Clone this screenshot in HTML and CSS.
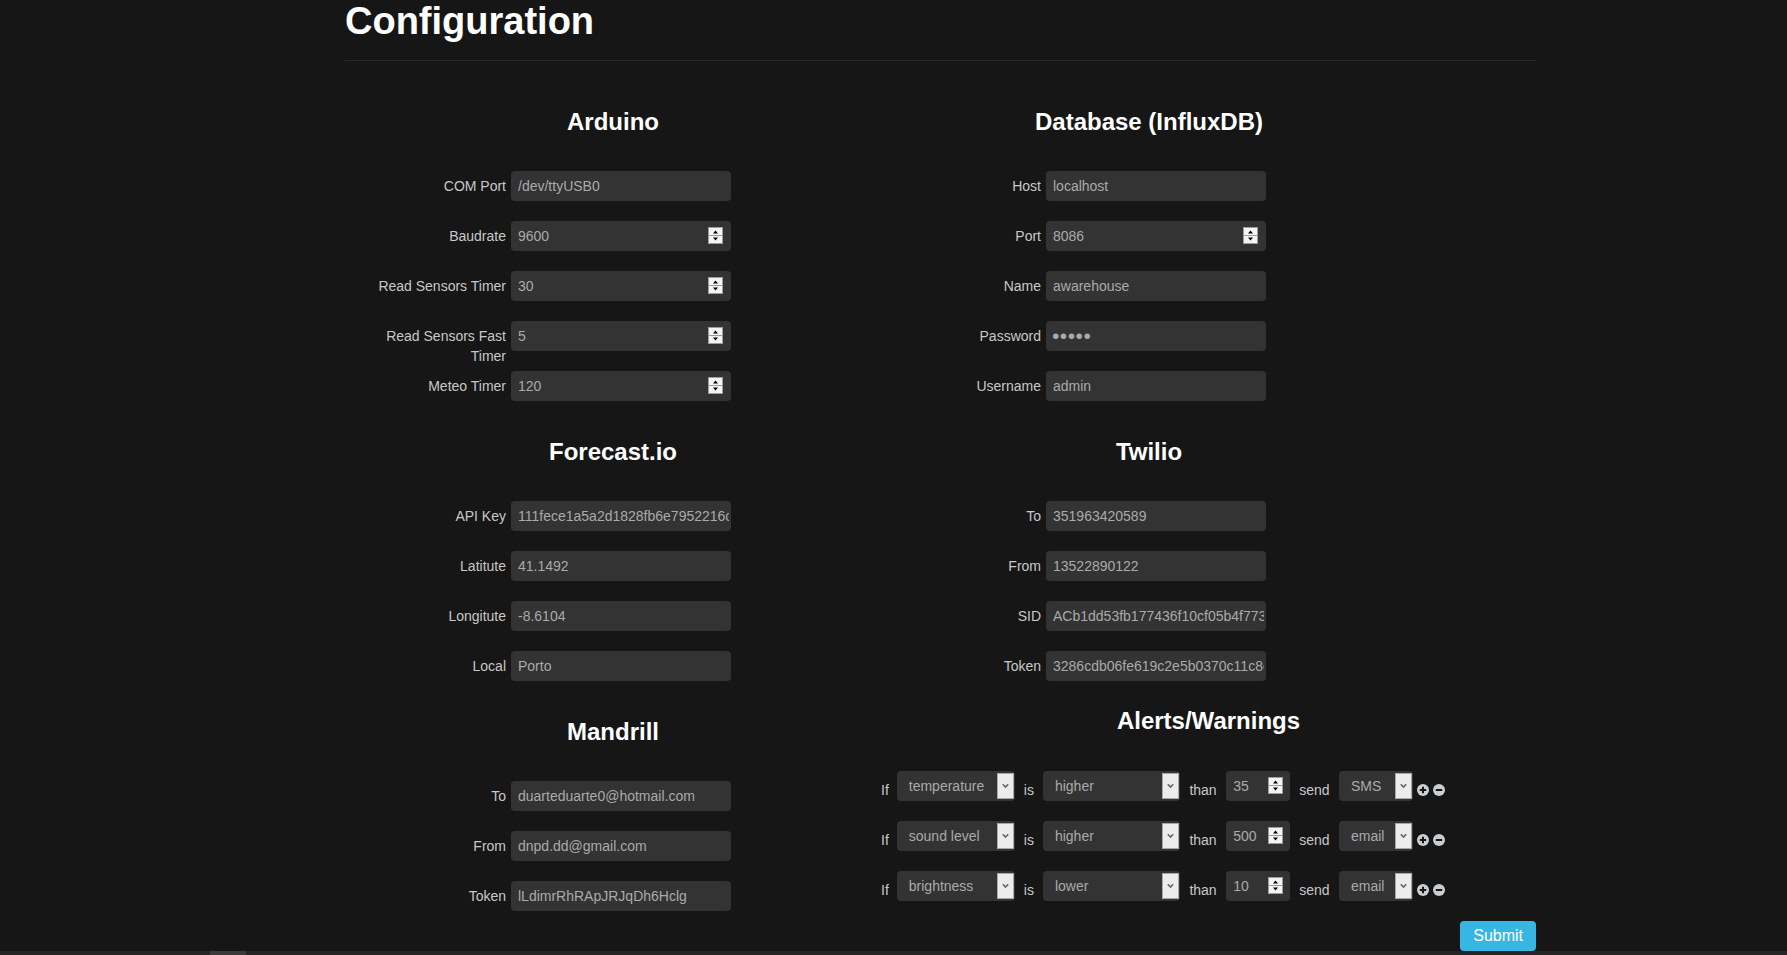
FILE: index.html
```html
<!DOCTYPE html>
<html lang="en">
<head>
<meta charset="utf-8">
<title>Configuration</title>
<link rel="stylesheet" href="styles.css">
</head>
<body>
<div class="page">
  <h1 class="title">Configuration</h1>
  <hr class="rule">
  <form class="grid">
    <div class="col col-left">
      <section class="sect">
        <h3 class="head">Arduino</h3>
        <div class="row"><label class="lbl">COM Port</label><input class="inp" type="text" value="/dev/ttyUSB0"></div>
        <div class="row"><label class="lbl">Baudrate</label><div class="num"><input class="inp" type="number" value="9600"><svg class="spin" viewBox="0 0 15 17"><rect x=".5" y=".5" width="14" height="16" fill="#f4f4f4" stroke="#9c9c9c"/><path d="M1 8.5h13" stroke="#9c9c9c"/><path d="M5 6.5h5L7.5 3.5z" fill="#000"/><path d="M5 10.5h5L7.5 13.5z" fill="#000"/></svg></div></div>
        <div class="row"><label class="lbl">Read Sensors Timer</label><div class="num"><input class="inp" type="number" value="30"><svg class="spin" viewBox="0 0 15 17"><rect x=".5" y=".5" width="14" height="16" fill="#f4f4f4" stroke="#9c9c9c"/><path d="M1 8.5h13" stroke="#9c9c9c"/><path d="M5 6.5h5L7.5 3.5z" fill="#000"/><path d="M5 10.5h5L7.5 13.5z" fill="#000"/></svg></div></div>
        <div class="row"><label class="lbl">Read Sensors Fast Timer</label><div class="num"><input class="inp" type="number" value="5"><svg class="spin" viewBox="0 0 15 17"><rect x=".5" y=".5" width="14" height="16" fill="#f4f4f4" stroke="#9c9c9c"/><path d="M1 8.5h13" stroke="#9c9c9c"/><path d="M5 6.5h5L7.5 3.5z" fill="#000"/><path d="M5 10.5h5L7.5 13.5z" fill="#000"/></svg></div></div>
        <div class="row"><label class="lbl">Meteo Timer</label><div class="num"><input class="inp" type="number" value="120"><svg class="spin" viewBox="0 0 15 17"><rect x=".5" y=".5" width="14" height="16" fill="#f4f4f4" stroke="#9c9c9c"/><path d="M1 8.5h13" stroke="#9c9c9c"/><path d="M5 6.5h5L7.5 3.5z" fill="#000"/><path d="M5 10.5h5L7.5 13.5z" fill="#000"/></svg></div></div>
      </section>
      <section class="sect">
        <h3 class="head">Forecast.io</h3>
        <div class="row"><label class="lbl">API Key</label><input class="inp" type="text" value="111fece1a5a2d1828fb6e7952216c0a3"></div>
        <div class="row"><label class="lbl">Latitute</label><input class="inp" type="text" value="41.1492"></div>
        <div class="row"><label class="lbl">Longitute</label><input class="inp" type="text" value="-8.6104"></div>
        <div class="row"><label class="lbl">Local</label><input class="inp" type="text" value="Porto"></div>
      </section>
      <section class="sect">
        <h3 class="head">Mandrill</h3>
        <div class="row"><label class="lbl">To</label><input class="inp" type="text" value="duarteduarte0@hotmail.com"></div>
        <div class="row"><label class="lbl">From</label><input class="inp" type="text" value="dnpd.dd@gmail.com"></div>
        <div class="row"><label class="lbl">Token</label><input class="inp" type="text" value="lLdimrRhRApJRJqDh6Hclg"></div>
      </section>
    </div>
    <div class="col col-right">
      <section class="sect">
        <h3 class="head">Database (InfluxDB)</h3>
        <div class="row"><label class="lbl">Host</label><input class="inp" type="text" value="localhost"></div>
        <div class="row"><label class="lbl">Port</label><div class="num"><input class="inp" type="number" value="8086"><svg class="spin" viewBox="0 0 15 17"><rect x=".5" y=".5" width="14" height="16" fill="#f4f4f4" stroke="#9c9c9c"/><path d="M1 8.5h13" stroke="#9c9c9c"/><path d="M5 6.5h5L7.5 3.5z" fill="#000"/><path d="M5 10.5h5L7.5 13.5z" fill="#000"/></svg></div></div>
        <div class="row"><label class="lbl">Name</label><input class="inp" type="text" value="awarehouse"></div>
        <div class="row"><label class="lbl">Password</label><input class="inp pass" type="password" value="admin"></div>
        <div class="row"><label class="lbl">Username</label><input class="inp" type="text" value="admin"></div>
      </section>
      <section class="sect">
        <h3 class="head">Twilio</h3>
        <div class="row"><label class="lbl">To</label><input class="inp" type="text" value="351963420589"></div>
        <div class="row"><label class="lbl">From</label><input class="inp" type="text" value="13522890122"></div>
        <div class="row"><label class="lbl">SID</label><input class="inp" type="text" value="ACb1dd53fb177436f10cf05b4f7731a2"></div>
        <div class="row"><label class="lbl">Token</label><input class="inp" type="text" value="3286cdb06fe619c2e5b0370c11c8e4d2"></div>
      </section>
      <section class="sect alerts">
        <h3 class="head">Alerts/Warnings</h3>

        <div class="arow">
          <span class="word w-if">If</span>
          <div class="sel s1"><select><option>temperature</option></select><svg class="dd" viewBox="0 0 17 26"><rect x=".5" y=".5" width="16" height="25" fill="#ececec" stroke="#a8a8a8"/><path d="M5.8 11.2l2.7 2.8 2.7-2.8" fill="none" stroke="#666" stroke-width="1.6"/></svg></div>
          <span class="word w-is">is</span>
          <div class="sel s2"><select><option>higher</option></select><svg class="dd" viewBox="0 0 17 26"><rect x=".5" y=".5" width="16" height="25" fill="#ececec" stroke="#a8a8a8"/><path d="M5.8 11.2l2.7 2.8 2.7-2.8" fill="none" stroke="#666" stroke-width="1.6"/></svg></div>
          <span class="word w-than">than</span>
          <div class="num anum"><input class="inp" type="number" value="35"><svg class="spin" viewBox="0 0 15 17"><rect x=".5" y=".5" width="14" height="16" fill="#f4f4f4" stroke="#9c9c9c"/><path d="M1 8.5h13" stroke="#9c9c9c"/><path d="M5 6.5h5L7.5 3.5z" fill="#000"/><path d="M5 10.5h5L7.5 13.5z" fill="#000"/></svg></div>
          <span class="word w-send">send</span>
          <div class="sel s4"><select><option>SMS</option></select><svg class="dd" viewBox="0 0 17 26"><rect x=".5" y=".5" width="16" height="25" fill="#ececec" stroke="#a8a8a8"/><path d="M5.8 11.2l2.7 2.8 2.7-2.8" fill="none" stroke="#666" stroke-width="1.6"/></svg></div>
          <svg class="icon plus" viewBox="0 0 12 12"><circle cx="6" cy="6" r="6" fill="#c9ced3"/><path d="M6 2.8v6.4M2.8 6h6.4" stroke="#161616" stroke-width="2"/></svg>
          <svg class="icon minus" viewBox="0 0 12 12"><circle cx="6" cy="6" r="6" fill="#c9ced3"/><path d="M2.8 6h6.4" stroke="#161616" stroke-width="2"/></svg>
        </div>

        <div class="arow">
          <span class="word w-if">If</span>
          <div class="sel s1"><select><option>sound level</option></select><svg class="dd" viewBox="0 0 17 26"><rect x=".5" y=".5" width="16" height="25" fill="#ececec" stroke="#a8a8a8"/><path d="M5.8 11.2l2.7 2.8 2.7-2.8" fill="none" stroke="#666" stroke-width="1.6"/></svg></div>
          <span class="word w-is">is</span>
          <div class="sel s2"><select><option>higher</option></select><svg class="dd" viewBox="0 0 17 26"><rect x=".5" y=".5" width="16" height="25" fill="#ececec" stroke="#a8a8a8"/><path d="M5.8 11.2l2.7 2.8 2.7-2.8" fill="none" stroke="#666" stroke-width="1.6"/></svg></div>
          <span class="word w-than">than</span>
          <div class="num anum"><input class="inp" type="number" value="500"><svg class="spin" viewBox="0 0 15 17"><rect x=".5" y=".5" width="14" height="16" fill="#f4f4f4" stroke="#9c9c9c"/><path d="M1 8.5h13" stroke="#9c9c9c"/><path d="M5 6.5h5L7.5 3.5z" fill="#000"/><path d="M5 10.5h5L7.5 13.5z" fill="#000"/></svg></div>
          <span class="word w-send">send</span>
          <div class="sel s4"><select><option>email</option></select><svg class="dd" viewBox="0 0 17 26"><rect x=".5" y=".5" width="16" height="25" fill="#ececec" stroke="#a8a8a8"/><path d="M5.8 11.2l2.7 2.8 2.7-2.8" fill="none" stroke="#666" stroke-width="1.6"/></svg></div>
          <svg class="icon plus" viewBox="0 0 12 12"><circle cx="6" cy="6" r="6" fill="#c9ced3"/><path d="M6 2.8v6.4M2.8 6h6.4" stroke="#161616" stroke-width="2"/></svg>
          <svg class="icon minus" viewBox="0 0 12 12"><circle cx="6" cy="6" r="6" fill="#c9ced3"/><path d="M2.8 6h6.4" stroke="#161616" stroke-width="2"/></svg>
        </div>

        <div class="arow">
          <span class="word w-if">If</span>
          <div class="sel s1"><select><option>brightness</option></select><svg class="dd" viewBox="0 0 17 26"><rect x=".5" y=".5" width="16" height="25" fill="#ececec" stroke="#a8a8a8"/><path d="M5.8 11.2l2.7 2.8 2.7-2.8" fill="none" stroke="#666" stroke-width="1.6"/></svg></div>
          <span class="word w-is">is</span>
          <div class="sel s2"><select><option>lower</option></select><svg class="dd" viewBox="0 0 17 26"><rect x=".5" y=".5" width="16" height="25" fill="#ececec" stroke="#a8a8a8"/><path d="M5.8 11.2l2.7 2.8 2.7-2.8" fill="none" stroke="#666" stroke-width="1.6"/></svg></div>
          <span class="word w-than">than</span>
          <div class="num anum"><input class="inp" type="number" value="10"><svg class="spin" viewBox="0 0 15 17"><rect x=".5" y=".5" width="14" height="16" fill="#f4f4f4" stroke="#9c9c9c"/><path d="M1 8.5h13" stroke="#9c9c9c"/><path d="M5 6.5h5L7.5 3.5z" fill="#000"/><path d="M5 10.5h5L7.5 13.5z" fill="#000"/></svg></div>
          <span class="word w-send">send</span>
          <div class="sel s4"><select><option>email</option></select><svg class="dd" viewBox="0 0 17 26"><rect x=".5" y=".5" width="16" height="25" fill="#ececec" stroke="#a8a8a8"/><path d="M5.8 11.2l2.7 2.8 2.7-2.8" fill="none" stroke="#666" stroke-width="1.6"/></svg></div>
          <svg class="icon plus" viewBox="0 0 12 12"><circle cx="6" cy="6" r="6" fill="#c9ced3"/><path d="M6 2.8v6.4M2.8 6h6.4" stroke="#161616" stroke-width="2"/></svg>
          <svg class="icon minus" viewBox="0 0 12 12"><circle cx="6" cy="6" r="6" fill="#c9ced3"/><path d="M2.8 6h6.4" stroke="#161616" stroke-width="2"/></svg>
        </div>

        <div class="actions"><button class="btn" type="button">Submit</button></div>
      </section>
    </div>
  </form>
</div>
<div class="hscroll"><div class="thumb"></div></div>
</body>
</html>
```

FILE: styles.css
```css
html, body {
  margin: 0;
  padding: 0;
  height: 100%;
  overflow: hidden;
  background: #161616;
}

body {
  font-family: "Liberation Sans", Arial, sans-serif;
  font-size: 14px;
  color: #c8c8c8;
}

.page {
  margin-left: 345px;
  width: 1191px;
}

.title {
  margin: 0;
  font-size: 38px;
  line-height: 42px;
  font-weight: bold;
  color: #ffffff;
}

.rule {
  margin: 18px 0 0 0;
  border: 0;
  border-top: 1px solid #2b2b2b;
  height: 0;
}

.grid {
  display: grid;
  grid-template-columns: 536px 536px;
  margin: 30px 0 0 0;
}

.head {
  margin: 17px 0 36px;
  font-size: 24px;
  line-height: 27px;
  font-weight: bold;
  color: #ffffff;
  text-align: center;
}

.row {
  display: flex;
  align-items: flex-start;
  height: 50px;
}

.lbl {
  width: 160px;
  box-sizing: border-box;
  padding: 5px 0 0 15px;
  margin-right: 5px;
  text-align: right;
  line-height: 20px;
  color: #c8c8c8;
}

.col-left .lbl {
  width: 161px;
}

.inp {
  display: block;
  width: 220px;
  height: 30px;
  box-sizing: border-box;
  margin: 0;
  border: 0;
  border-radius: 4px;
  background: #333333;
  color: #aaaaaa;
  font-family: "Liberation Sans", Arial, sans-serif;
  font-size: 14px;
  padding: 0 2px 0 7px;
  outline: none;
}

.inp::-webkit-inner-spin-button,
.inp::-webkit-outer-spin-button {
  -webkit-appearance: none;
  margin: 0;
}

.inp[type="number"] {
  -moz-appearance: textfield;
}

.pass {
  font-size: 21px;
  letter-spacing: 0.5px;
  padding-left: 6px;
}

.num {
  position: relative;
}

.spin {
  position: absolute;
  right: 8px;
  top: 6px;
  width: 15px;
  height: 17px;
}

/* Alerts */
.alerts {
  width: 655px;
}

.alerts .head {
  margin: 6px 0 37px;
}

.arow {
  display: flex;
  align-items: flex-start;
  height: 50px;
}

.word {
  padding-top: 9px;
  line-height: 20px;
  color: #c8c8c8;
}

.w-if { margin-right: 8px; }
.w-is { margin: 0 9px; }
.w-than { margin: 0 9.5px; }
.w-send { margin: 0 9.5px 0 9px; }

.sel {
  position: relative;
  height: 30px;
}

.sel select {
  display: block;
  -webkit-appearance: none;
  appearance: none;
  width: 100%;
  height: 30px;
  margin: 0;
  border: 0;
  border-radius: 4px;
  background: #333333;
  color: #aaaaaa;
  font-family: "Liberation Sans", Arial, sans-serif;
  font-size: 14px;
  padding: 0 0 0 12px;
  outline: none;
}

.s1 { width: 118px; }
.s2 { width: 137px; }
.s4 { width: 74px; }

.dd {
  position: absolute;
  right: 1px;
  top: 2px;
  width: 17px;
  height: 26px;
}

.anum .inp {
  width: 64px;
}

.anum .spin {
  right: 7px;
}

.icon {
  width: 12px;
  height: 12px;
  margin-top: 13px;
  flex: none;
}

.plus { margin-left: 4px; }
.minus { margin-left: 4px; }

.actions {
  display: flex;
  justify-content: flex-end;
}

.btn {
  height: 30px;
  padding: 0 13px;
  margin: 0;
  border: 0;
  border-radius: 4px;
  background: #38b6e3;
  color: #ffffff;
  font-family: "Liberation Sans", Arial, sans-serif;
  font-size: 16px;
}

.hscroll {
  position: fixed;
  left: 0;
  right: 0;
  bottom: 0;
  height: 4px;
  background: #252525;
}

.thumb {
  position: absolute;
  left: 210px;
  top: 0;
  bottom: 0;
  width: 36px;
  background: #3a3a3a;
}
```
